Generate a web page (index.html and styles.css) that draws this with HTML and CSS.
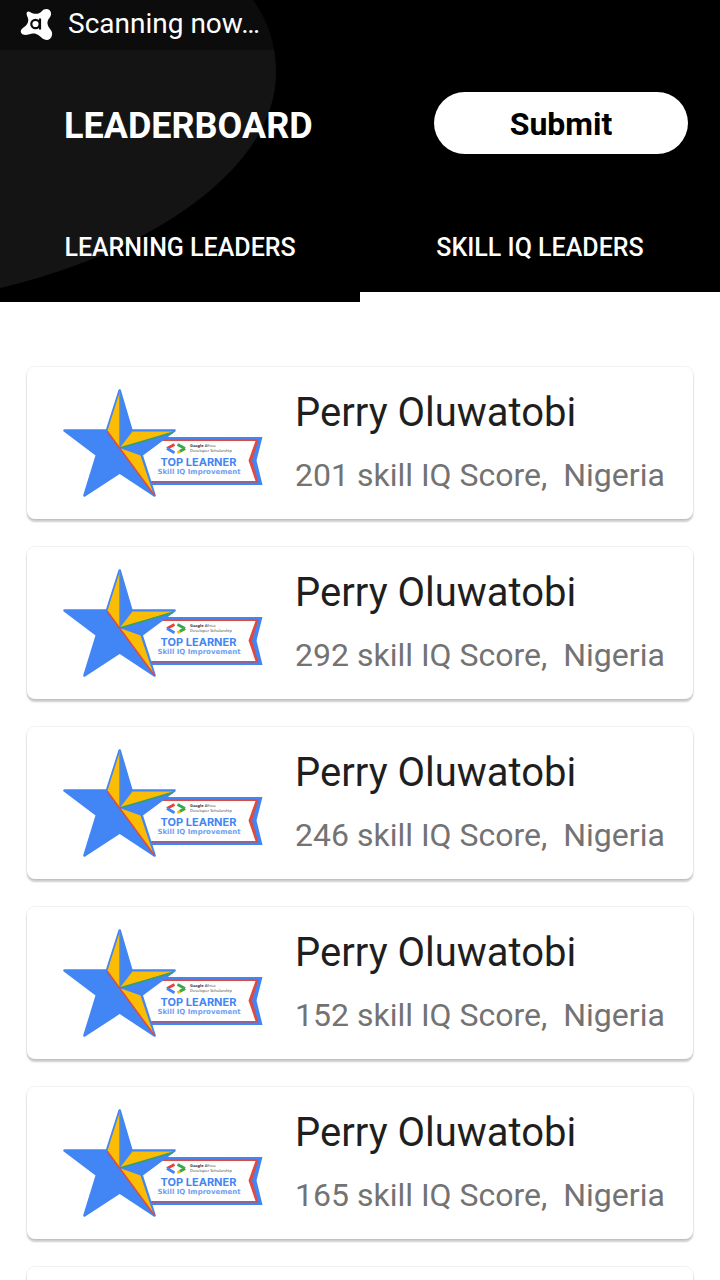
FILE: index.html
```html
<!DOCTYPE html>
<html lang="en">
<head>
<meta charset="utf-8">
<meta name="viewport" content="width=device-width, initial-scale=1">
<title>Leaderboard</title>
<link rel="stylesheet" href="styles.css">
</head>
<body>
<div class="app">
  <header class="header">
    <svg class="blob" viewBox="0 0 276 288" aria-hidden="true"><path d="M0 0H253C267 19 276 42 276 73C276 170 146 254 0 288Z" fill="#141414"/></svg>
    <div class="status">
      <svg class="status-icon" viewBox="0 0 34 34" aria-hidden="true">
        <path d="M10.500 5.200C14 7.500 19 7.500 21.500 4.500C24.500 0.500 30.500 1.500 31 6C31.500 10.500 27 11.500 27.500 16.500C28 21.500 33 23 32 28C31 33.500 26 34 22.500 31.500C19 28.500 17 26 12.500 26.500C8 27.500 6 28.500 3 27.500C-0.500 25.500 0.500 22.500 3.500 20.500C7.500 18 9.500 14 7.500 10C5.500 6 7 3 10.500 5.200Z" fill="#fff"/>
        <circle cx="15.500" cy="17" r="4.200" fill="none" stroke="#0b0b0b" stroke-width="2.200"/>
        <path d="M20 11.500V22.500" stroke="#0b0b0b" stroke-width="2.200"/>
      </svg>
      <span>Scanning now…</span>
    </div>
    <div class="toolbar">
      <h1 class="title">LEADERBOARD</h1>
      <button class="submit" type="button">Submit</button>
    </div>
    <nav class="tabs">
      <a class="tab" href="#learning">LEARNING LEADERS</a>
      <a class="tab tab-active" href="#skill" aria-current="page">SKILL IQ LEADERS</a>
    </nav>
  </header>
  <main class="list" id="skill"></main>
</div>
<template id="card">
  <article class="card">
    <svg class="badge" viewBox="60 385 206 115" role="img" aria-label="Top learner">
      <path d="M150 437H262.500L256.500 460.500L262.500 485H150Z" fill="#4285f4"/>
      <path d="M150 439.500H258.500L252 460.500L258.500 482.500H150Z" fill="#e04a3f"/>
      <path d="M150 441H255.500L248.500 460.500L255.500 481H148L138 456Z" fill="#fff"/>
      <path d="M119.700 390.500L131.500 430.500H174.500L141.500 455L154.500 495.500L119.700 472.500L84.500 495.500L97 455L64.500 430.500H107Z" fill="#4285f4" stroke="#4285f4" stroke-width="2.600" stroke-linejoin="round"/>
      <path d="M119.700 392V448L107.500 430.500Z" fill="#fbbc05"/>
      <path d="M119.700 448L132.500 431.500H173Z" fill="#fbbc05"/>
      <path d="M119.700 448L140.500 455.500L153.500 494Z" fill="#fbbc05"/>
      <path d="M119.700 391V448" stroke="#8d9470" stroke-width="1"/>
      <path d="M119.700 448L173 432.500" stroke="#34a066" stroke-width="1.600"/>
      <path d="M107 431L154.500 495.500" stroke="#e04a3f" stroke-width="1.500"/>
      <g fill="none" stroke-width="2.800">
        <path d="M174.500 444.500L167 448.500" stroke="#ea4335"/>
        <path d="M167 448.500L174.500 452.800" stroke="#4285f4"/>
        <path d="M177.500 444.500L185 448.500" stroke="#34a853"/>
        <path d="M185 448.500L177.500 452.800" stroke="#fbbc05"/>
        <path d="M185 448.500L180 451.300" stroke="#34a853"/>
      </g>
      <text class="badge-org" x="190" y="447"><tspan class="badge-strong">Google</tspan> Africa</text>
      <text class="badge-org" x="190" y="452">Developer Scholarship</text>
      <text class="badge-title" x="198.500" y="466" text-anchor="middle">TOP LEARNER</text>
      <text class="badge-sub" x="199" y="474" text-anchor="middle">Skill IQ Improvement</text>
    </svg>
    <div class="info"><h2 class="name"></h2><p class="score"></p></div>
  </article>
</template>
<script src="leaders.js"></script>
</body>
</html>
```
FILE: leaders.js
```js
const leaders = [
  { name: "Perry Oluwatobi", score: 201, country: "Nigeria" },
  { name: "Perry Oluwatobi", score: 292, country: "Nigeria" },
  { name: "Perry Oluwatobi", score: 246, country: "Nigeria" },
  { name: "Perry Oluwatobi", score: 152, country: "Nigeria" },
  { name: "Perry Oluwatobi", score: 165, country: "Nigeria" }
];
const list = document.querySelector(".list");
const template = document.getElementById("card");
for (const leader of leaders) {
  const card = template.content.cloneNode(true);
  card.querySelector(".name").textContent = leader.name;
  card.querySelector(".score").textContent = `${leader.score} skill IQ Score,\u00a0 ${leader.country}`;
  list.append(card);
}
const next = document.createElement("article");
next.className = "card";
list.append(next);
```
FILE: styles.css
```css
* { box-sizing: border-box; }
body { margin: 0; background: #fff; font-family: Roboto, "Liberation Sans", sans-serif; }
h1, h2, p { margin: 0; }
.app { display: flex; flex-direction: column; height: 100vh; overflow: hidden; }
.header { position: relative; flex: none; background: #000; color: #fff; }
.blob { position: absolute; top: 0; left: 0; width: 276px; height: 288px; }
.status {
  position: relative;
  display: flex;
  align-items: center;
  gap: 14px;
  height: 50px;
  padding: 0 20px 3px;
  background: rgba(0, 0, 0, 0.4);
  font-size: 28px;
}
.status-icon { width: 34px; height: 34px; }
.toolbar {
  position: relative;
  display: flex;
  align-items: center;
  justify-content: space-between;
  padding: 42px 32px 40px 64px;
}
.title { font-size: 36px; font-weight: 700; line-height: 44px; padding-top: 6px; }
.submit {
  width: 254px;
  height: 62px;
  padding: 2px 0 0;
  border: 0;
  border-radius: 31px;
  background: #fff;
  color: #000;
  font: 700 32px Roboto, "Liberation Sans", sans-serif;
}
.tabs { position: relative; display: grid; grid-template-columns: 1fr 1fr; }
.tab {
  height: 108px;
  padding-top: 39px;
  color: #fff;
  font-size: 25px;
  font-weight: 500;
  line-height: 30px;
  text-align: center;
  text-decoration: none;
}
.tab-active { border-bottom: 10px solid #fff; }
.list { flex: 1; display: flex; flex-direction: column; gap: 28px; padding: 65px 27px 0; overflow: hidden; }
.card {
  flex: none;
  display: flex;
  gap: 29px;
  height: 152px;
  padding: 18px 0 0 33px;
  border-radius: 8px;
  background: #fff;
  box-shadow: 0 0 1px 1px rgba(0, 0, 0, 0.06), 0 3px 2px 0 rgba(0, 0, 0, 0.2);
}
.badge { flex: none; width: 206px; height: 115px; }
.info { white-space: nowrap; }
.name { padding-top: 1px; color: #1f1f1f; font-size: 40px; font-weight: 400; line-height: 54px; }
.score { padding-top: 13px; color: #737373; font-size: 32px; line-height: 44px; }
.badge-org { fill: #333; font: 4px "Open Sans", sans-serif; }
.badge-strong { font-weight: 700; }
.badge-title { fill: #4285f4; font: 700 11px Inter, sans-serif; }
.badge-sub { fill: #6ea0f5; font: 700 7px "DejaVu Sans", sans-serif; }
```
